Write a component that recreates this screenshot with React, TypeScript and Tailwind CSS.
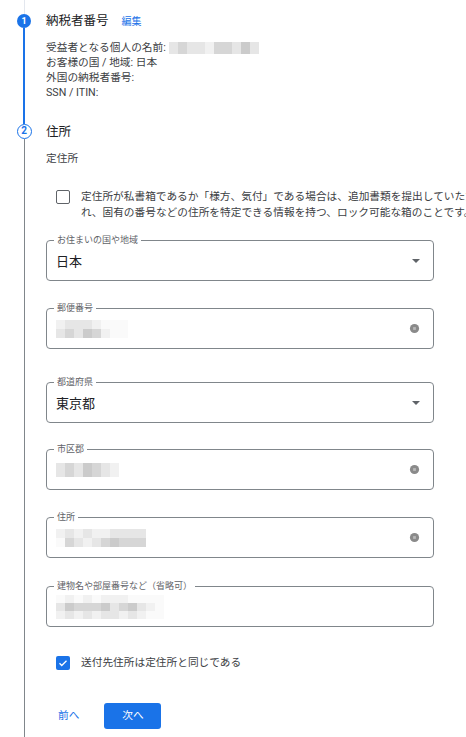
const BLUE = "#1a73e8";

type Cells = string[][];

function Mosaic({ rows, cell = 9, h = 9 }: { rows: Cells; cell?: number; h?: number }) {
  return (
    <div className="flex flex-col blur-[0.6px]">
      {rows.map((r, i) => (
        <div key={i} className="flex">
          {r.map((c, j) => (
            <div key={j} style={{ width: cell, height: h, background: c }} />
          ))}
        </div>
      ))}
    </div>
  );
}

function ClearIcon() {
  return (
    <svg viewBox="0 0 24 24" className="w-[11px] h-[11px]">
      <circle cx="12" cy="12" r="10" fill="#8a8a8a" />
      <rect x="9" y="9" width="6" height="6" fill="#b9b9b9" />
    </svg>
  );
}

function Caret() {
  return (
    <svg viewBox="0 0 10 5" className="w-[8px] h-[4px]">
      <path d="M0 0l5 5 5-5z" fill="#5f6368" />
    </svg>
  );
}

function Field({
  label,
  children,
  icon,
  className = "",
}: {
  label: string;
  children: React.ReactNode;
  icon?: "clear" | "caret";
  className?: string;
}) {
  return (
    <div className={"relative w-[388px] h-[41px] border border-[#80868b] rounded-[4px] flex items-center pl-[9px] pr-[13px] " + className}>
      <span className="absolute -top-[7px] left-[7px] px-[3px] bg-white text-[9px] leading-[12px] text-[#5f6368]">
        {label}
      </span>
      <div className="flex-1">{children}</div>
      {icon === "clear" && <ClearIcon />}
      {icon === "caret" && <Caret />}
    </div>
  );
}

const a = "#e6e6e6";
const b = "#d6d6d6";
const c = "#cbcbcb";
const d = "#f1f1f1";
const w = "#fafafa";

export default function App() {
  return (
    <div className="w-[466px] h-[737px] overflow-hidden bg-white text-[#202124] font-['Roboto','Noto_Sans_CJK_JP',sans-serif]">
      {/* ステップ1 */}
      <div className="flex h-[124px]">
        <div className="w-[48px] shrink-0 flex flex-col items-center">
          <div className="h-[14px] w-px bg-[#e3e7ee]" />
          <div className="w-[14px] h-[14px] rounded-full bg-[#1a73e8] text-white text-[9px] font-bold leading-[14px] text-center">
            1
          </div>
          <div className="flex-1 w-[1.5px] bg-[#1a73e8]" />
        </div>
        <div className="-ml-[2px] pt-[14px]">
          <div className="flex items-center h-[14px]">
            <span className="text-[12.5px]">納税者番号</span>
            <span className="ml-[13px] text-[10px] text-[#1a73e8]">編集</span>
          </div>
          <div className="mt-[12px] text-[10.7px] leading-[15px] text-[#3c4043]">
            <div className="flex items-center">
              <span>受益者となる個人の名前:</span>
              <div className="ml-[3px]">
                <Mosaic rows={[[a, b, a, a, d, b, b, a, c, a]]} h={12} />
              </div>
            </div>
            <div>お客様の国 / 地域: 日本</div>
            <div>外国の納税者番号:</div>
            <div>SSN / ITIN:</div>
          </div>
        </div>
      </div>

      {/* ステップ2 */}
      <div className="flex h-[613px]">
        <div className="w-[48px] shrink-0 flex flex-col items-center">
          <div className="w-[15px] h-[15px] rounded-full border-[1.5px] border-[#1a73e8] bg-white text-[#1a73e8] text-[10px] font-bold leading-[12px] text-center">
            2
          </div>
          <div className="flex-1 w-px bg-[#80868b]" />
        </div>
        <div className="-ml-[2px] min-w-0">
          <div className="flex items-center h-[16px] text-[12.5px]">住所</div>
          <div className="mt-[11px] text-[10.7px] leading-[15px] text-[#3c4043]">定住所</div>

          <div className="mt-[23px] pl-[10px] flex">
            <div className="mt-[1px] w-[14px] h-[14px] shrink-0 rounded-[2px] border-[1.5px] border-[#5f6368]" />
            <div className="ml-[11px] text-[10.7px] leading-[16px] text-[#3c4043] whitespace-nowrap">
              <div>定住所が私書箱であるか「様方、気付」である場合は、追加書類を提出していただ</div>
              <div>れ、固有の番号などの住所を特定できる情報を持つ、ロック可能な箱のことです。</div>
            </div>
          </div>

          <Field label="お住まいの国や地域" icon="caret" className="mt-[19px]">
            <span className="text-[13px]">日本</span>
          </Field>

          <Field label="郵便番号" icon="clear" className="mt-[27px]">
            <Mosaic
              rows={[
                [d, a, a, a, d, w, w, w],
                [a, b, a, c, b, d, w, w],
              ]}
            />
          </Field>

          <Field label="都道府県" icon="caret" className="mt-[33px]">
            <span className="text-[13px]">東京都</span>
          </Field>

          <Field label="市区郡" icon="clear" className="mt-[26px]">
            <Mosaic rows={[[a, b, a, c, b, a, d]]} h={14} />
          </Field>

          <Field label="住所" icon="clear" className="mt-[27px]">
            <Mosaic
              rows={[
                [d, a, d, a, d, d, a, a, a, a],
                [w, b, a, d, a, b, c, b, b, b],
              ]}
            />
          </Field>

          <Field label="建物名や部屋番号など（省略可）" className="mt-[28px]">
            <Mosaic
              rows={[
                [w, d, w, d, w, d, d, d, w, w, w, w],
                [a, c, b, b, b, c, a, b, c, a, d, w],
                [d, a, d, a, d, a, a, d, a, d, w, w],
              ]}
              h={8}
            />
          </Field>

          <div className="mt-[28px] pl-[10px] flex items-center">
            <div className="w-[14px] h-[14px] rounded-[2px] bg-[#1a73e8] flex items-center justify-center">
              <svg viewBox="0 0 24 24" className="w-[12px] h-[12px]">
                <path d="M5 12.5l4.5 4.5L19 7.5" fill="none" stroke="white" strokeWidth="2.6" />
              </svg>
            </div>
            <span className="ml-[11px] text-[10.7px] text-[#3c4043]">送付先住所は定住所と同じである</span>
          </div>

          <div className="mt-[32px] flex items-center">
            <button className="ml-[12px] text-[10.7px] text-[#1a73e8]">前へ</button>
            <button
              className="ml-[25px] w-[57px] h-[26px] rounded-[3px] text-white text-[10.7px]"
              style={{ background: BLUE }}
            >
              次へ
            </button>
          </div>
        </div>
      </div>
    </div>
  );
}
